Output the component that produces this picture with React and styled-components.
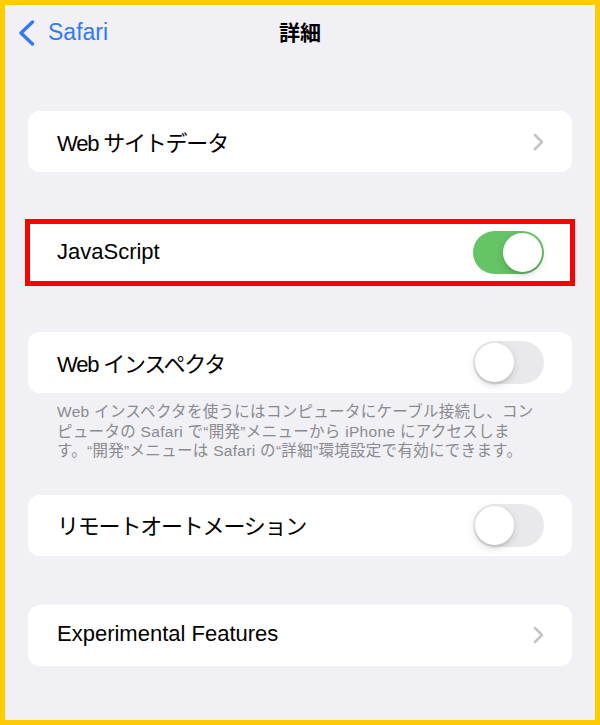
import React from 'react'
import styled, { createGlobalStyle } from 'styled-components'

const GlobalStyle = createGlobalStyle`
  html, body {
    margin: 0;
    padding: 0;
  }
  body {
    font-family: "Liberation Sans", "Noto Sans CJK JP", sans-serif;
    -webkit-font-smoothing: antialiased;
  }
`

const Frame = styled.div`
  box-sizing: border-box;
  width: 600px;
  height: 725px;
  border: 5px solid #ffcc00;
  background: #f0f0f5;
  overflow: hidden;
`

const NavBar = styled.div`
  display: grid;
  grid-template-columns: 1fr auto 1fr;
  align-items: center;
  height: 52px;
  padding: 0 13px;
`

const BackButton = styled.div`
  display: flex;
  align-items: center;
  gap: 12px;
  color: #3478f6;
  font-size: 23px;
  padding-top: 3px;
`

const Title = styled.div`
  font-family: "Noto Sans CJK JP", sans-serif;
  font-weight: 700;
  font-size: 21px;
  color: #000;
`

const Content = styled.div`
  display: flex;
  flex-direction: column;
  padding: 54px 23px 0;
`

const Section = styled.div`
  display: flex;
  flex-direction: column;
  margin-bottom: ${(p) => p.$gap ?? 50}px;
`

const Card = styled.div`
  display: flex;
  align-items: center;
  justify-content: space-between;
  height: 61px;
  padding: 0 28px 0 29px;
  background: #fff;
  border-radius: ${(p) => (p.$highlight ? 0 : 12)}px;
  outline: ${(p) => (p.$highlight ? '5px solid #ff0000' : 'none')};
  outline-offset: -2px;
`

const Label = styled.span`
  font-size: 22px;
  letter-spacing: ${(p) => (p.$jp ? '-1.2px' : '0')};
  color: #000;
  margin-top: -2px;
`

const Footer = styled.div`
  padding: 9px 0 0 29px;
  font-size: 15.5px;
  letter-spacing: 0.3px;
  line-height: 19.5px;
  color: #8a8a8e;
  white-space: nowrap;
`

const Switch = styled.div`
  box-sizing: border-box;
  display: flex;
  justify-content: ${(p) => (p.$on ? 'flex-end' : 'flex-start')};
  align-items: center;
  width: 71px;
  height: 43px;
  padding: 2px;
  border-radius: 22px;
  background: ${(p) => (p.$on ? '#65c466' : '#e9e9eb')};
`

const Knob = styled.div`
  width: 39px;
  height: 39px;
  border-radius: 50%;
  background: #fff;
  box-shadow: 0 3px 8px rgba(0, 0, 0, 0.15), 0 3px 1px rgba(0, 0, 0, 0.06);
`

const Chevron = () => (
  <svg width="12" height="18" viewBox="0 0 12 18">
    <polyline points="3,2 10,9 3,16" fill="none" stroke="#c4c4c7" strokeWidth="2.6" strokeLinecap="round" strokeLinejoin="round" />
  </svg>
)

const BackChevron = () => (
  <svg width="18" height="26" viewBox="0 0 18 26">
    <polyline points="14.5,2 3,13 14.5,24" fill="none" stroke="#3478f6" strokeWidth="3.4" strokeLinecap="round" strokeLinejoin="round" />
  </svg>
)

const Toggle = ({ on }) => (
  <Switch $on={on}>
    <Knob />
  </Switch>
)

export default function App() {
  return (
    <>
      <GlobalStyle />
      <Frame>
        <NavBar>
          <BackButton>
            <BackChevron />
            Safari
          </BackButton>
          <Title>詳細</Title>
          <div />
        </NavBar>
        <Content>
          <Section>
            <Card>
              <Label $jp>Web サイトデータ</Label>
              <Chevron />
            </Card>
          </Section>
          <Section $gap={49}>
            <Card $highlight>
              <Label>JavaScript</Label>
              <Toggle on />
            </Card>
          </Section>
          <Section $gap={34}>
            <Card>
              <Label $jp>Web インスペクタ</Label>
              <Toggle />
            </Card>
            <Footer>
              Web インスペクタを使うにはコンピュータにケーブル接続し、コン<br />
              ピュータの Safari で“開発”メニューから iPhone にアクセスしま<br />
              す。“開発”メニューは Safari の“詳細”環境設定で有効にできます。
            </Footer>
          </Section>
          <Section $gap={49}>
            <Card>
              <Label $jp>リモートオートメーション</Label>
              <Toggle />
            </Card>
          </Section>
          <Section>
            <Card>
              <Label>Experimental Features</Label>
              <Chevron />
            </Card>
          </Section>
        </Content>
      </Frame>
    </>
  )
}
